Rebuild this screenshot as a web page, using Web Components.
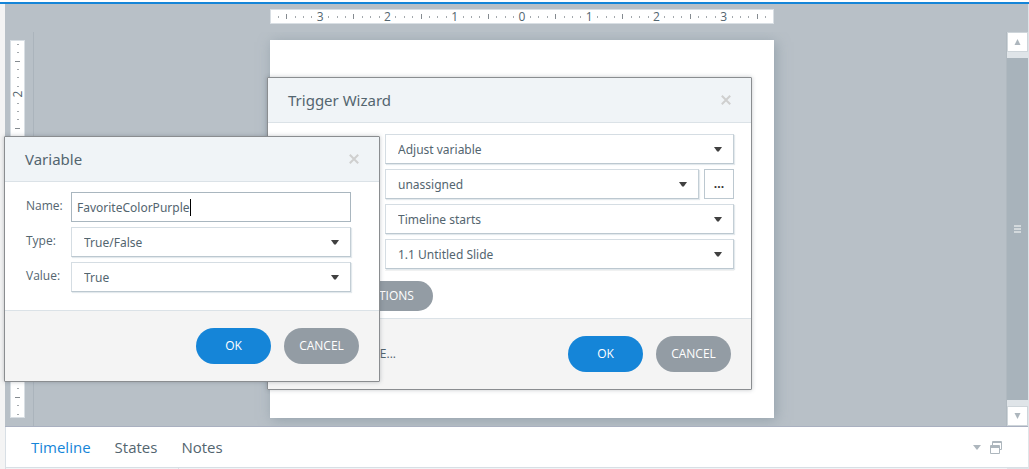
<!DOCTYPE html>
<html lang="en">
<head>
<meta charset="utf-8">
<title>Trigger Wizard</title>
<style>
  html, body { margin: 0; height: 100%; }
  body { background: #f4f4f4; color: #53656f; font: 12px/16px "Open Sans", "Noto Sans", sans-serif; overflow: hidden; }
</style>
</head>
<body>
<app-shell></app-shell>
<script>
const define = (name, html) => customElements.define(name, class extends HTMLElement {
  connectedCallback() {
    if (this.shadowRoot) return;
    const root = this.attachShadow({ mode: 'open' });
    const t = document.createElement('template');
    t.innerHTML = typeof html === 'function' ? html(this) : html;
    root.append(t.content.cloneNode(true));
  }
});

/* Ruler: one cell per eighth of an inch, numbers on whole inches */
define('slide-ruler', el => {
  const n = Number(el.getAttribute('reach'));
  let cells = '';
  for (let i = -n; i <= n; i++) {
    cells += i % 8 === 0 ? `<span>${Math.abs(i / 8)}</span>` : `<i${i % 4 === 0 ? ' class="half"' : ''}></i>`;
  }
  return `<style>
    :host { display: flex; box-sizing: border-box; background: #fff; box-shadow: inset 0 0 0 1px #d9dfe4; height: 15px; padding: 0 4px; font-size: 12px; line-height: 15px; }
    i, span { flex: 1 1 0; min-width: 0; min-height: 0; display: flex; align-items: center; justify-content: center; }
    i::before { content: ""; width: 1px; height: 2px; background: #a4a9ad; }
    i.half::before { height: 5px; background: #858b90; }
    :host([vertical]) { flex-direction: column; width: 15px; height: 100%; padding: 0; }
    :host([vertical]) i::before { width: 2px; height: 1px; }
    :host([vertical]) i.half::before { width: 5px; }
    :host([vertical]) span { writing-mode: vertical-rl; transform: rotate(180deg); }
  </style>${cells}`;
});

define('scroll-bar', `<style>
    :host { display: flex; flex-direction: column; background: #dfe4e8; }
    button { all: unset; box-sizing: border-box; height: 20px; background: #fff; border: 1px solid #ced5da; display: grid; place-items: center; }
    .thumb { flex: 1; margin: 6px 0; background: #a8b3bb; display: flex; flex-direction: column; gap: 1px; align-items: center; justify-content: center; }
    .thumb i { width: 7px; height: 2px; background: #d3d9dc; }
  </style>
  <button aria-label="Scroll up"><svg width="7" height="6" viewBox="0 0 7 6"><path d="M3.5 0L6.5 6H.5z" fill="#adb6bd"/></svg></button>
  <div class="thumb"><i></i><i></i><i></i></div>
  <button aria-label="Scroll down"><svg width="7" height="6" viewBox="0 0 7 6"><path d="M3.5 6L6.5 0H.5z" fill="#adb6bd"/></svg></button>`);

define('drop-down', el => `<style>
    :host { display: grid; align-items: center; height: 30px; flex: 1; }
    select { grid-area: 1 / 1; box-sizing: border-box; appearance: none; width: 100%; height: 30px; margin: 0; padding: 2px 30px 0 12px; border: 1px solid #d5dde3; border-right-color: #c3ced5; border-bottom-color: #bcc8d0; border-radius: 0; background: #fff; color: inherit; font: 12px/16px "Noto Sans", sans-serif; box-shadow: 1px 1px 1px #e3e9ed; outline: none; }
    svg { grid-area: 1 / 1; justify-self: end; margin-right: 12px; pointer-events: none; }
  </style>
  <select aria-label="${el.getAttribute('label')}"><option>${el.getAttribute('value')}</option></select>
  <svg width="8" height="5" viewBox="0 0 8 5"><path d="M0 0H8L4.8 4.6H3.2z" fill="#404040"/></svg>`);

define('text-field', el => `<style>
    :host { display: flex; align-items: center; flex: 1; box-sizing: border-box; height: 30px; padding: 0 5px; background: #fff; border: 1px solid #a9b6bf; }
    input { field-sizing: content; border: 0; padding: 2px 0 0; margin: 0; background: none; color: inherit; font: 12px/16px "Noto Sans", sans-serif; outline: none; caret-color: transparent; }
    i { width: 1px; height: 17px; background: #000; }
  </style>
  <input type="text" aria-label="${el.getAttribute('label')}" value="${el.getAttribute('value')}"><i></i>`);

define('pill-button', `<style>
    :host { display: flex; }
    button { width: 100%; height: 36px; border: 0; border-radius: 18px; padding: 0; background: #939ca4; color: #fff; font: inherit; text-align: center; white-space: nowrap; }
    :host([primary]) button { background: #1585d8; }
    :host([small]) button { height: 30px; padding: 0 18px; }
  </style><button><slot></slot></button>`);

define('dialog-window', el => `<style>
    :host { display: block; position: absolute; box-sizing: border-box; background: #fff; border: 1px solid #8a8d90; border-radius: 1px; box-shadow: 0 0 4px rgba(60, 70, 80, .3); }
    header { display: flex; align-items: center; justify-content: space-between; height: 44px; padding: 0 20px; background: #f0f4f7; border-bottom: 1px solid #dbe2e7; }
    h2 { margin: 0; font: 400 15px/20px "Noto Sans", sans-serif; }
    .close { all: unset; display: flex; }
    footer { display: flex; align-items: center; gap: 13px; height: 70px; padding: 0 20px; background: #f4f4f4; border-top: 1px solid #dbe2e7; }
    .extra { flex: 1; }
    pill-button { width: 75px; }
  </style>
  <header><h2>${el.getAttribute('heading')}</h2>
    <button class="close" aria-label="Close"><svg width="10" height="10" viewBox="0 0 10 10"><path d="M.8.8l8.4 8.4M9.2.8L.8 9.2" stroke="#cfcfcf" stroke-width="2"/></svg></button></header>
  <slot></slot>
  <footer><div class="extra"><slot name="extra"></slot></div>
    <pill-button primary>OK</pill-button><pill-button>CANCEL</pill-button></footer>`);

define('trigger-wizard', `<style>
    :host { display: contents; }
    dialog-window { left: 262px; top: 73px; width: 485px; }
    .rows { display: flex; flex-direction: column; gap: 5px; margin-left: 117px; padding: 11px 0 1px; margin-right: 17px; border-bottom: 1px solid #f2f2f2; }
    .row { display: flex; gap: 5px; }
    .more { width: 30px; height: 30px; padding: 0; border: 1px solid #bcc8d0; background: #fff; color: #333; font: inherit; font-weight: 700; }
    .conditions { width: 160px; margin: 10px 0 7px 5px; }
    a { display: block; width: 108px; text-align: right; color: inherit; text-decoration: none; }
  </style>
  <dialog-window heading="Trigger Wizard">
    <div class="rows">
      <div class="row"><drop-down label="Action" value="Adjust variable"></drop-down></div>
      <div class="row"><drop-down label="Variable" value="unassigned"></drop-down><button class="more" aria-label="Browse variables">...</button></div>
      <div class="row"><drop-down label="When" value="Timeline starts"></drop-down></div>
      <div class="row"><drop-down label="Object" value="1.1 Untitled Slide"></drop-down></div>
    </div>
    <pill-button small class="conditions">+ SHOW CONDITIONS</pill-button>
    <a slot="extra" href="#">MORE...</a>
  </dialog-window>`);

define('variable-dialog', `<style>
    :host { display: contents; }
    dialog-window { left: -1px; top: 132px; width: 376px; }
    .rows { display: flex; flex-direction: column; gap: 5px; padding: 10px 28px 18px 21px; }
    .row { display: flex; }
    .row > span { width: 45px; padding-top: 6px; }
  </style>
  <dialog-window heading="Variable">
    <div class="rows">
      <div class="row"><span>Name:</span><text-field label="Name" value="FavoriteColorPurple"></text-field></div>
      <div class="row"><span>Type:</span><drop-down label="Type" value="True/False"></drop-down></div>
      <div class="row"><span>Value:</span><drop-down label="Value" value="True"></drop-down></div>
    </div>
  </dialog-window>`);

define('slide-stage', `<style>
    :host { position: relative; display: grid; grid-template-columns: 29px 1fr 21px; grid-template-rows: 28px 394px; background: #b8c0c7; border-bottom: 1px solid #a9b0c0; }
    .top { grid-area: 1 / 2; display: flex; justify-content: center; padding: 5px 0 0 3px; }
    .top slide-ruler { width: 504px; }
    .side { grid-area: 2 / 1; box-sizing: border-box; padding: 8px 8px 8px 5px; border-right: 1px solid #abb4bc; }
    .canvas { grid-area: 2 / 2; display: flex; justify-content: center; padding: 8px 0 8px 3px; overflow: hidden; border-right: 1px solid #b0b9c0; }
    scroll-bar { grid-area: 2 / 3; }
    .slide { width: 504px; background: #fff; box-shadow: 2px 2px 12px rgba(125, 142, 154, .6); }
  </style>
  <div class="top"><slide-ruler reach="29"></slide-ruler></div>
  <div class="side"><slide-ruler vertical reach="22"></slide-ruler></div>
  <div class="canvas"><div class="slide"></div></div>
  <scroll-bar></scroll-bar>
  <trigger-wizard></trigger-wizard>
  <variable-dialog></variable-dialog>`);

define('panel-tabs', `<style>
    :host { display: flex; flex-direction: column; flex: 1; background: #f1f4f6; border-left: 1px solid #d8dfe5; }
    nav { display: flex; align-items: center; gap: 24px; height: 40px; padding: 0 26px 0 25px; background: #fff; border-bottom: 1px solid #d8dfe5; font-size: 15px; line-height: 20px; }
    a { color: inherit; text-decoration: none; }
    a.on { color: #1585d8; }
    .tools { display: flex; align-items: center; gap: 9px; margin-left: auto; }
    .tools button { all: unset; display: flex; }
    .tracks { flex: 1; display: grid; grid-template-columns: 173px 1fr 21px; }
    .tracks i:first-child { border-right: 1px solid #d8dfe5; }
    .tracks i:last-child { background: #dfe4e8; }
  </style>
  <nav><a class="on" href="#">Timeline</a><a href="#">States</a><a href="#">Notes</a>
    <div class="tools">
      <button aria-label="Panel menu"><svg width="8" height="5" viewBox="0 0 8 5"><path d="M0 0H8L4 5z" fill="#adb6bd"/></svg></button>
      <button aria-label="Undock panel"><svg width="12" height="13" viewBox="0 0 12 13" fill="none" stroke="#adb6bd"><path d="M2.5 4V.5h9v8H10M2 1.5h10M.5 4.5h9v8h-9zM0 5.5h10M0 6.500h10"/></svg></button>
    </div></nav>
  <div class="tracks"><i></i><i></i><i></i></div>`);

define('app-shell', `<style>
    :host { display: flex; flex-direction: column; box-sizing: border-box; min-height: 100vh; }
    .top { height: 2px; background: #fff; border-bottom: 2px solid #1585d8; }
    main { flex: 1; display: flex; flex-direction: column; margin-left: 5px; border-right: 1px solid #dfe4e8; }
  </style>
  <div class="top"></div>
  <main><slide-stage></slide-stage><panel-tabs></panel-tabs></main>`);
</script>
</body>
</html>
